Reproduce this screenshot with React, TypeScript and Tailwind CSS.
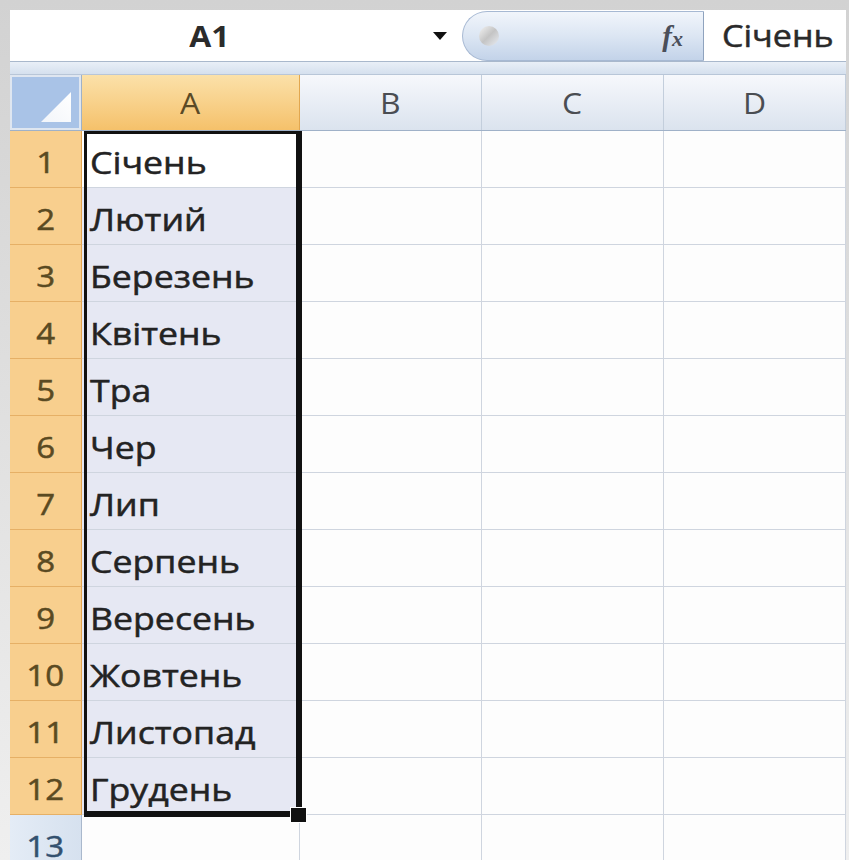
import React from "react"

const months = [
    "Січень",
    "Лютий",
    "Березень",
    "Квітень",
    "Тра",
    "Чер",
    "Лип",
    "Серпень",
    "Вересень",
    "Жовтень",
    "Листопад",
    "Грудень",
]

const font = "font-['Open_Sans','Noto_Sans',sans-serif]"
const heavy = "[-webkit-text-stroke:0.5px_currentColor]"

const FormulaBar = () => (
    <div className="flex h-[52px] bg-white border-b border-[#a9b8cc]">
        {/* Name box */}
        <div className="w-[398px] flex items-center justify-center">
            <span className={`${font} text-[29px] font-bold text-[#2b2b2b] inline-block scale-x-[1.1]`}>A1</span>
        </div>
        <div className="w-[54px] flex items-center justify-center pl-[10px]">
            <svg width="16" height="10" viewBox="0 0 16 10">
                <path d="M1 1 L15 1 L8 9 Z" fill="#111" />
            </svg>
        </div>

        {/* fx pill */}
        <div className="w-[242px] h-[50px] mt-[1px] rounded-l-full border border-[#a7b9d3] border-r-[#8fa3be] bg-gradient-to-b from-[#f1f5fb] via-[#dce6f3] to-[#c3d3e9] flex items-center justify-between pl-[16px] pr-[20px]">
            <div className="w-[20px] h-[20px] rounded-full bg-gradient-to-br from-[#f4f4f4] via-[#c4c4c4] to-[#e9edf3]" />
            <span className="font-['Liberation_Serif',serif] italic font-bold text-[29px] text-[#4a4f5a] leading-none">
                f<span className="text-[22px]">x</span>
            </span>
        </div>

        {/* Cell content */}
        <div className="flex-1 flex items-center pl-[18px]">
            <span className={`${font} ${heavy} text-[31px] text-[#2a2a2a] inline-block origin-left scale-x-[1.1]`}>Січень</span>
        </div>
    </div>
)

const HeaderRow = () => (
    <div className="flex h-[56px] border-b border-[#9fb1c8]">
        {/* Select-all corner */}
        <div className="w-[72px] border-r border-[#9fb1c8] p-[2px] bg-[#dfe6f0]">
            <div className="relative w-full h-full bg-[#a9c3e7]">
                <svg className="absolute right-[8px] bottom-[6px]" width="30" height="30" viewBox="0 0 30 30">
                    <defs>
                        <linearGradient id="corner" x1="0" y1="1" x2="1" y2="0">
                            <stop offset="0" stopColor="#f2f5fa" />
                            <stop offset="1" stopColor="#ffffff" />
                        </linearGradient>
                    </defs>
                    <path d="M0 30 L30 0 L30 30 Z" fill="url(#corner)" />
                </svg>
            </div>
        </div>

        <div className="w-[218px] flex items-center justify-center bg-gradient-to-b from-[#fbe1a9] to-[#f5c16a] border-r border-[#e2a74f]">
            <span className={`${font} text-[29px] text-[#5b4a26] inline-block scale-x-[1.1]`}>A</span>
        </div>
        {["B", "C", "D"].map((col) => (
            <div
                key={col}
                className="w-[182px] flex items-center justify-center bg-gradient-to-b from-[#f6f8fc] to-[#dbe3ee] border-r border-[#c3cedc]"
            >
                <span className={`${font} text-[29px] text-[#4a4d52] inline-block scale-x-[1.1]`}>{col}</span>
            </div>
        ))}
    </div>
)

const DataRow = ({ n, label }: { n: number; label?: string }) => {
    const inRange = label !== undefined
    return (
        <div className="flex h-[57px]">
            <div
                className={
                    inRange
                        ? "w-[72px] flex items-center justify-center bg-[#f8cf8e] border-r border-[#e3a550] border-b border-b-[#e6b066]"
                        : "w-[72px] flex items-center justify-center bg-gradient-to-r from-[#e4ecf6] to-[#d6e1ef] border-r border-[#a9b8cc] border-b border-b-[#c5d0de]"
                }
            >
                <span
                    className={`${font} ${heavy} text-[30px] inline-block scale-x-[1.1] pt-[4px] ${
                        inRange ? "text-[#5a4a22]" : "text-[#33506f]"
                    }`}
                >
                    {n}
                </span>
            </div>
            <div
                className={`w-[218px] flex items-center pl-[8px] border-r border-b border-[#cfd5df] ${
                    n === 1 ? "bg-white" : inRange ? "bg-[#e6e8f3]" : "bg-[#fdfdfd]"
                }`}
            >
                {label && (
                    <span
                        className={`${font} ${heavy} text-[31px] text-[#232323] inline-block origin-left scale-x-[1.15] pt-[6px]`}
                    >
                        {label}
                    </span>
                )}
            </div>
            {[0, 1, 2].map((c) => (
                <div key={c} className="w-[182px] bg-[#fdfdfd] border-r border-b border-[#cfd5df]" />
            ))}
        </div>
    )
}

export default function App() {
    return (
        <div className="w-[849px] h-[860px] overflow-hidden bg-gradient-to-b from-[#d2d2d2] to-[#efefef] pl-[10px] pt-[10px]">
            <div className="relative w-[836px] bg-white">
                <FormulaBar />

                {/* Gap strip above the column headers */}
                <div className="h-[13px] bg-gradient-to-b from-[#e9eff7] to-[#d5e0ee] border-b border-[#b8c6d8]" />

                <HeaderRow />

                {months.map((m, i) => (
                    <DataRow key={m} n={i + 1} label={m} />
                ))}
                <DataRow n={13} />

                {/* Selection outline round A1:A12 */}
                <div className="absolute left-[74px] top-[121px] w-[218px] h-[686px] border-l-[3px] border-t-[3px] border-r-[6px] border-b-[6px] border-[#111] pointer-events-none" />
                <div className="absolute left-[280px] top-[797px] w-[17px] h-[16px] bg-[#111] border border-white" />
            </div>
        </div>
    )
}
